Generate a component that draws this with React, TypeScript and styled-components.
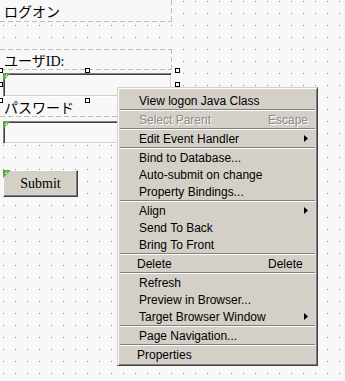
import React from 'react';
import styled, { createGlobalStyle } from 'styled-components';

const GlobalStyle = createGlobalStyle`
  html, body { margin: 0; padding: 0; }
  body { background: #f8f8f8; overflow: hidden; }
`;

const BG = '#f8f8f8';
const DOT = '#8c8c8c';
const DASH = '#bcbcbc';
const FACE = '#d4d0c8';

const Canvas = styled.div`
  position: relative;
  width: 345px;
  height: 381px;
  overflow: hidden;
  background-color: ${BG};
  background-image:
    linear-gradient(90deg, ${BG} 11px, transparent 11px),
    linear-gradient(180deg, ${BG} 11px, ${DOT} 11px);
  background-size: 12px 12px;
  background-position: 4px 2px;
`;

const Form = styled.div`
  width: 172px;
  display: flex;
  flex-direction: column;
`;

const dashH = `repeating-linear-gradient(90deg, ${DASH} 0 5px, transparent 5px 8px)`;
const dashV = `repeating-linear-gradient(180deg, ${DASH} 0 5px, transparent 5px 8px)`;

const LabelBox = styled.div<{ $h: number; $top?: boolean }>`
  height: ${p => p.$h}px;
  box-sizing: border-box;
  padding-left: 4px;
  display: flex;
  align-items: center;
  font-family: "Liberation Serif", "Noto Sans CJK JP", serif;
  font-size: 14px;
  color: #000;
  background-color: ${BG};
  background-image: ${dashH}, ${dashV}${p => (p.$top ? `, ${dashH}` : '')};
  background-size: 100% 1px, 1px 100%${p => (p.$top ? ', 100% 1px' : '')};
  background-position: left bottom, right top${p => (p.$top ? ', left top' : '')};
  background-repeat: no-repeat;
`;

const Spacer = styled.div<{ $h: number }>`
  height: ${p => p.$h}px;
`;

const Field = styled.div<{ $mt: number; $h: number }>`
  position: relative;
  margin-top: ${p => p.$mt}px;
  margin-left: 3px;
  width: 169px;
  height: ${p => p.$h}px;
  box-sizing: border-box;
  background: ${BG};
  border-style: solid;
  border-width: 1px;
  border-color: #808080 #ffffff #ffffff #808080;
  box-shadow: inset 1px 1px 0 #404040, inset -1px -1px 0 ${FACE};
`;

const Handle = styled.span<{ $x: number; $y: number }>`
  position: absolute;
  left: ${p => p.$x}px;
  top: ${p => p.$y}px;
  width: 5px;
  height: 5px;
  box-sizing: border-box;
  border: 1px solid #000;
  background: #fff;
  z-index: 2;
`;

const MarkerBox = styled.span<{ $off: number }>`
  position: absolute;
  left: ${p => p.$off}px;
  top: ${p => p.$off}px;
  width: 8px;
  height: 8px;
  display: block;
  line-height: 0;
  z-index: 1;
`;

const Marker = ({ off = -1 }: { off?: number }) => (
  <MarkerBox $off={off}>
    <svg width="8" height="8" viewBox="0 0 8 8">
      <polygon points="0,0 8,0 0,8" fill="#5aa84a" />
      <path d="M3.5 1.5 V3.5 H2" stroke="#d8f0c8" strokeWidth="1" fill="none" />
    </svg>
  </MarkerBox>
);

const ButtonWrap = styled.div`
  position: relative;
  margin-top: 26px;
  margin-left: 3px;
  width: 75px;
  height: 27px;
`;

const SubmitButton = styled.div`
  width: 100%;
  height: 100%;
  box-sizing: border-box;
  display: flex;
  align-items: center;
  justify-content: center;
  background: ${FACE};
  border-style: solid;
  border-width: 1px;
  border-color: #ffffff #404040 #404040 #ffffff;
  box-shadow: inset -1px -1px 0 #808080;
  font-family: "Liberation Serif", serif;
  font-size: 14px;
  color: #000;
`;

const Menu = styled.div`
  position: absolute;
  left: 117px;
  top: 87px;
  width: 201px;
  box-sizing: border-box;
  padding: 4px 0 2px 0;
  background: ${FACE};
  border-style: solid;
  border-width: 1px;
  border-color: ${FACE} #404040 #404040 ${FACE};
  box-shadow: inset 1px 1px 0 #ffffff, inset -1px -1px 0 #808080;
  font-family: "Liberation Sans", Arial, sans-serif;
  font-size: 12px;
  z-index: 5;
`;

const Item = styled.div<{ $disabled?: boolean }>`
  height: 17px;
  display: flex;
  align-items: center;
  color: ${p => (p.$disabled ? '#8a8a8a' : '#000')};
  text-shadow: ${p => (p.$disabled ? '1px 1px 0 #ffffff' : 'none')};
  white-space: nowrap;
`;

const ItemLabel = styled.span<{ $indent: number }>`
  width: 150px;
  box-sizing: border-box;
  padding-left: ${p => p.$indent}px;
`;

const Shortcut = styled.span`
  flex: 1;
`;

const Arrow = styled.span`
  width: 4px;
  height: 7px;
  margin-right: 9px;
  display: block;
  line-height: 0;
`;

const Separator = styled.div`
  height: 2px;
  margin: 0 2px;
  box-sizing: border-box;
  border-top: 1px solid #808080;
  border-bottom: 1px solid #ffffff;
`;

type Entry =
  | { sep: true }
  | { label: string; shortcut?: string; sub?: boolean; disabled?: boolean; indent?: number };

const entries: Entry[] = [
  { label: 'View logon Java Class' },
  { sep: true },
  { label: 'Select Parent', shortcut: 'Escape', disabled: true },
  { sep: true },
  { label: 'Edit Event Handler', sub: true },
  { sep: true },
  { label: 'Bind to Database...' },
  { label: 'Auto-submit on change' },
  { label: 'Property Bindings...' },
  { sep: true },
  { label: 'Align', sub: true },
  { label: 'Send To Back' },
  { label: 'Bring To Front' },
  { sep: true },
  { label: 'Delete', shortcut: 'Delete', indent: 19 },
  { sep: true },
  { label: 'Refresh' },
  { label: 'Preview in Browser...' },
  { label: 'Target Browser Window', sub: true },
  { sep: true },
  { label: 'Page Navigation...' },
  { sep: true },
  { label: 'Properties', indent: 19 },
];

const handles: Array<[number, number]> = [
  [-5, -5], [82, -5], [172, -5],
  [-5, 9], [172, 9],
  [-5, 25], [82, 25],
];

export default function App() {
  return (
    <>
      <GlobalStyle />
      <Canvas>
        <Form>
          <LabelBox $h={22}>ログオン</LabelBox>
          <Spacer $h={27} />
          <LabelBox $h={21} $top>ユーザID:</LabelBox>
          <Field $mt={3} $h={24}>
            <Marker />
            {handles.map(([x, y], i) => (
              <Handle key={i} $x={x - 1} $y={y - 1} />
            ))}
          </Field>
          <LabelBox $h={20}>パスワード</LabelBox>
          <Field $mt={4} $h={23}>
            <Marker />
          </Field>
          <ButtonWrap>
            <SubmitButton>Submit</SubmitButton>
            <Marker off={0} />
          </ButtonWrap>
        </Form>
        <Menu>
          {entries.map((e, i) =>
            'sep' in e ? (
              <Separator key={i} />
            ) : (
              <Item key={i} $disabled={e.disabled}>
                <ItemLabel $indent={e.indent ?? 21}>{e.label}</ItemLabel>
                <Shortcut>{e.shortcut ?? ''}</Shortcut>
                {e.sub && (
                  <Arrow>
                    <svg width="4" height="7" viewBox="0 0 4 7">
                      <polygon points="0,0 4,3.5 0,7" fill="#000" />
                    </svg>
                  </Arrow>
                )}
              </Item>
            )
          )}
        </Menu>
      </Canvas>
    </>
  );
}
